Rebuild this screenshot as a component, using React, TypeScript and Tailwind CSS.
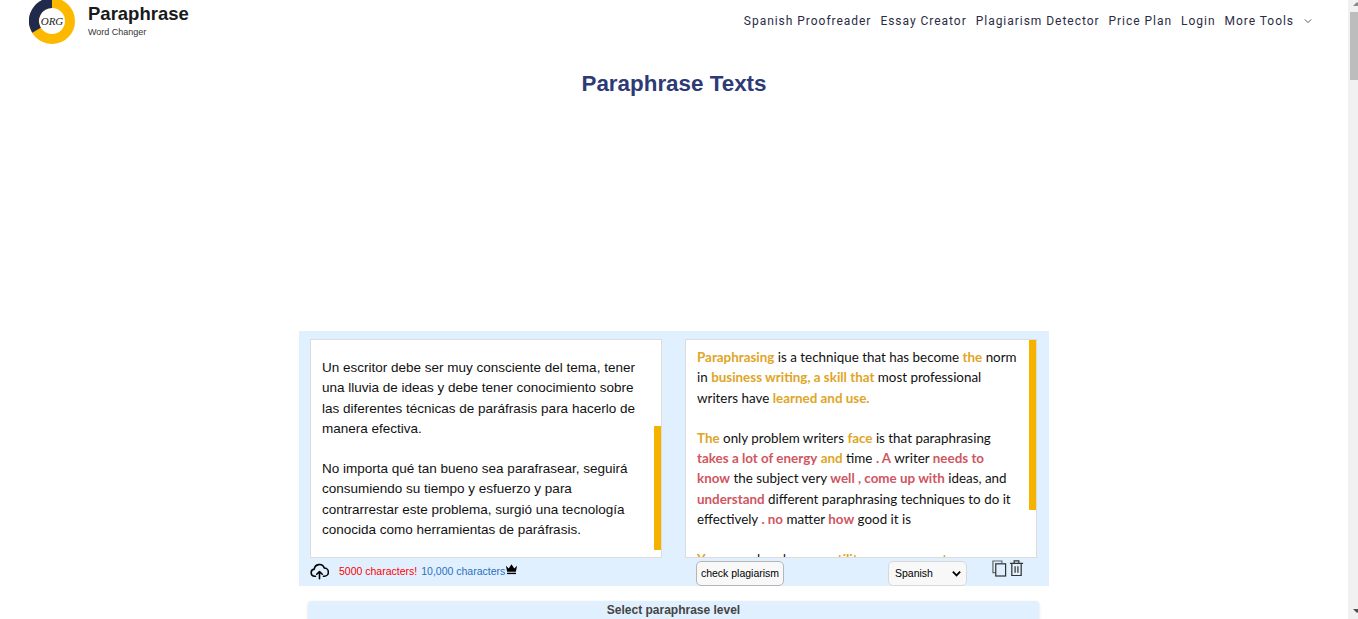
import React from 'react';

const Y = ({ children }: { children: React.ReactNode }) => <span className="font-bold text-[#e0a526]">{children}</span>;
const R = ({ children }: { children: React.ReactNode }) => <span className="font-bold text-[#d0565f]">{children}</span>;

const navLinks = ['Spanish Proofreader', 'Essay Creator', 'Plagiarism Detector', 'Price Plan', 'Login'];

const Logo = () => (
  <div className="relative w-[46px] h-[46px] -mt-[2px] shrink-0">
    <svg viewBox="0 0 46 46" className="w-full h-full">
      <circle cx="23" cy="23" r="18" fill="none" stroke="#fdb900" strokeWidth="10" />
      <path d="M23 5 A18 18 0 0 0 7.5 32.2" fill="none" stroke="#1f2a4d" strokeWidth="10" />
    </svg>
    <span className="absolute inset-0 flex items-center justify-center text-[11px] italic text-[#222] [font-family:'Liberation_Serif',serif]">
      ORG
    </span>
  </div>
);

const Navbar = () => (
  <header className="h-[44px] flex items-start justify-between pl-[29px] pr-[36px]">
    <div className="flex items-start gap-[13px]">
      <Logo />
      <div className="[font-family:'Liberation_Sans',sans-serif] -mt-[1px]">
        <div className="text-[18.5px] leading-[28px] font-bold text-[#1a1a1a] mt-[1px]">Paraphrase</div>
        <div className="text-[9px] leading-[10px] text-[#333] -mt-[1px]">Word Changer</div>
      </div>
    </div>
    <nav className="flex items-center gap-[9px] h-[41px] text-[12px] tracking-[0.97px] text-[#2b2b45] [font-family:Roboto,sans-serif]">
      {navLinks.map((l) => (
        <span key={l}>{l}</span>
      ))}
      <span className="flex items-center gap-[10px]">
        More Tools
        <svg viewBox="0 0 10 10" className="w-[8px] h-[8px] mt-[1px]" fill="none" stroke="#555" strokeWidth="1.2">
          <path d="M1 3l4 4 4-4" />
        </svg>
      </span>
    </nav>
  </header>
);

const LeftBox = () => (
  <div className="relative w-[352px] h-[219px] bg-white border border-[#dcdcdc] pl-[11px] pr-[24px] pt-[18px] text-[13.5px] leading-[20.3px] text-[#111] [font-family:'Liberation_Sans',sans-serif]">
    <p>
      Un escritor debe ser muy consciente del tema, tener una lluvia de ideas y debe tener conocimiento sobre las
      diferentes técnicas de paráfrasis para hacerlo de manera efectiva.
    </p>
    <p className="mt-[20px]">
      No importa qué tan bueno sea parafrasear, seguirá consumiendo su tiempo y esfuerzo y para contrarrestar este
      problema, surgió una tecnología conocida como herramientas de paráfrasis.
    </p>
    <div className="absolute right-0 top-[86px] w-[7px] h-[124px] bg-[#f5b300]" />
  </div>
);

const RightBox = () => (
  <div className="relative w-[352px] h-[219px] bg-white border border-[#dcdcdc] overflow-hidden pl-[11px] pr-[19px] pt-[7px] text-[13.4px] leading-[20.3px] text-[#111] [font-family:Lato,sans-serif]">
    <p>
      <Y>Paraphrasing</Y> is a technique that has become <Y>the</Y> norm in <Y>business writing, a skill that</Y> most
      professional writers have <Y>learned and use.</Y>
    </p>
    <p className="mt-[20px]">
      <Y>The</Y> only problem writers <Y>face</Y> is that paraphrasing <R>takes a lot of energy</R> <Y>and</Y> time{' '}
      <R>. A</R> writer <R>needs to know</R> the subject very <R>well , come up with</R> ideas, and <R>understand</R>{' '}
      different paraphrasing techniques to do it effectively <R>. no</R> matter <R>how</R> good it is
    </p>
    <p className="mt-[20px]">
      <Y>You</Y> may already use a <Y>utility</Y> or <Y>a</Y> process <Y>to</Y> paraphrase
    </p>
    <div className="absolute right-0 top-0 w-[7px] h-[170px] bg-[#f5b300]" />
  </div>
);

const ToolBar = () => (
  <div className="relative h-[28px] flex text-[10.5px] [font-family:'Liberation_Sans',sans-serif]">
    <div className="w-[364px] flex items-start">
      <svg viewBox="0 0 24 24" className="w-[19px] h-[19px] mt-[4px]" fill="none" stroke="#000" strokeWidth="2" strokeLinecap="round" strokeLinejoin="round">
        <path d="M7 18H6a4.500 4.500 0 0 1-.6-8.960A6.500 6.500 0 0 1 18 7.600 5 5 0 0 1 18 18h-1" />
        <path d="M12 21v-8M8.500 15.500L12 12l3.500 3.500" />
      </svg>
      <span className="ml-[10px] mt-[6px] text-[#f00]">5000 characters!</span>
      <span className="ml-[4px] mt-[6px] text-[#2a6fc0]">10,000 characters</span>
      <svg viewBox="0 0 14 12" className="w-[13px] h-[12px] mt-[5px]" fill="#000">
        <path d="M1 2.500l3 3L7 1l3 4.500 3-3-1.300 6.500H2.300z" />
        <rect x="2.200" y="10" width="9.600" height="1.500" />
      </svg>
    </div>
    <button className="h-[25px] mt-[3px] ml-[22px] w-[88px] rounded-[5px] border border-[#b5b5b5] bg-[#f8f8f8] text-black">
      check plagiarism
    </button>
    <div className="ml-[104px] mt-[3px] w-[79px] h-[25px] rounded-[5px] border border-[#d8d8d8] bg-[#f8f8f8] flex items-center justify-between pl-[6px] pr-[4px] text-black">
      Spanish
      <svg viewBox="0 0 12 12" className="w-[11px] h-[11px]" fill="none" stroke="#000" strokeWidth="2">
        <path d="M2 4l4 4 4-4" />
      </svg>
    </div>
    <svg viewBox="0 0 16 18" className="ml-[25px] mt-[2px] w-[15px] h-[17px]" fill="none" stroke="#666" strokeWidth="1.300">
      <path d="M3.500 13.500H1V1h9.500v2" />
      <rect x="4" y="4" width="10.500" height="13" stroke="#333" />
    </svg>
    <svg viewBox="0 0 16 18" className="ml-[2px] mt-[1px] w-[15px] h-[18px]" fill="none" stroke="#333" strokeWidth="1.300">
      <path d="M1 4h14M5.500 4V1.500h5V4M3 4v13h10V4M6.500 7v7M9.500 7v7" />
    </svg>
  </div>
);

// the browser's scrollbar, cut off at the right edge of the shot
const PageScrollbar = () => (
  <div className="w-[10px] h-[619px] bg-[#f1f1f1] overflow-hidden shrink-0">
    <div className="w-[17px] h-full flex flex-col items-center">
      <div className="mt-[2px] h-0 w-0 border-x-[4px] border-x-transparent border-b-[4px] border-b-[#8a8a8a]" />
      <div className="mt-[6px] w-[13px] h-[68px] bg-[#bdbdbd]" />
      <div className="mt-[529px] h-0 w-0 border-x-[4px] border-x-transparent border-t-[4px] border-t-[#505050]" />
    </div>
  </div>
);

const App = () => {
  return (
    <div className="h-[619px] w-[1358px] overflow-hidden flex bg-white">
      <div className="w-[1348px] h-[619px] overflow-hidden">
        <Navbar />
        <h1 className="mt-[23px] text-center text-[22.4px] leading-[34px] font-bold text-[#2d3a75] [font-family:'Liberation_Sans',sans-serif]">
          Paraphrase Texts
        </h1>
        <section className="ml-[299px] mt-[230px] w-[750px] h-[255px] bg-[#e0f0ff] pt-[8px] pl-[11px]">
          <div className="flex gap-[23px]">
            <LeftBox />
            <RightBox />
          </div>
          <ToolBar />
        </section>
        <div className="ml-[308px] mt-[15px] w-[731px] h-[30px] rounded-t-[4px] bg-[#e0f0ff] shadow-[0_1px_3px_rgba(0,0,0,0.15)] text-center pt-[2px] text-[12px] leading-[14px] font-bold text-[#444] [font-family:'Liberation_Sans',sans-serif]">
          Select paraphrase level
        </div>
      </div>
      <PageScrollbar />
    </div>
  );
};

export default App;
